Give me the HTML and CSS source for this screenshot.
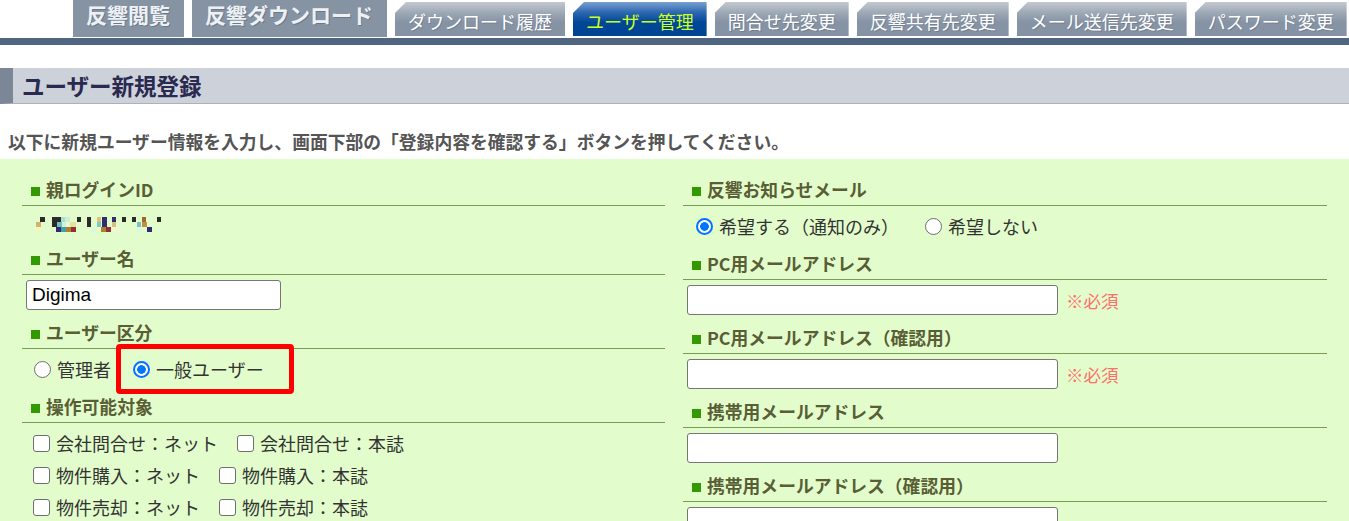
FILE: index.html
```html
<!DOCTYPE html>
<html lang="ja">
<head>
  <meta charset="UTF-8" />
  <meta name="viewport" content="width=device-width, initial-scale=1.0"/>
  <title>ユーザー新規登録</title>
  <link rel="stylesheet" href="styles.css">
</head>
<body>
  <div class="tabs">
    <a class="tab-main" href="#">反響閲覧</a>
    <a class="tab-main" href="#">反響ダウンロード</a>
    <a class="tab" href="#">ダウンロード履歴</a>
    <a class="tab active" href="#">ユーザー管理</a>
    <a class="tab" href="#">問合せ先変更</a>
    <a class="tab" href="#">反響共有先変更</a>
    <a class="tab" href="#">メール送信先変更</a>
    <a class="tab" href="#">パスワード変更</a>
  </div>
  <div class="tab-bar"></div>

  <h1 class="page-title">ユーザー新規登録</h1>
  <p class="lead">以下に新規ユーザー情報を入力し、画面下部の「登録内容を確認する」ボタンを押してください。</p>

  <form class="entry">
    <div class="col">
      <h3 class="field-title">親ログインID</h3>
      <div class="field-id">
        <!-- login id is masked -->
        <svg width="126" height="18" viewBox="0 0 126 18">
          <rect x="4" y="3" width="5" height="5" fill="#2b2b2b"/>
          <rect x="16" y="3" width="9" height="5" fill="#2b2b2b"/>
          <rect x="25" y="3" width="4" height="5" fill="#a8e0d0"/>
          <rect x="29" y="3" width="5" height="5" fill="#cdeed6"/>
          <rect x="41" y="3" width="4" height="5" fill="#2b2b2b"/>
          <rect x="51" y="3" width="4" height="5" fill="#2b2b2b"/>
          <rect x="61" y="3" width="4" height="5" fill="#e0c080"/>
          <rect x="66" y="3" width="5" height="5" fill="#2e2e6e"/>
          <rect x="76" y="3" width="4" height="5" fill="#2e2e6e"/>
          <rect x="86" y="3" width="4" height="5" fill="#2b2b2b"/>
          <rect x="96" y="3" width="4" height="5" fill="#2b2b2b"/>
          <rect x="106" y="3" width="4" height="5" fill="#a06830"/>
          <rect x="121" y="3" width="4" height="5" fill="#2b2b2b"/>
          <rect x="0" y="8" width="5" height="5" fill="#d8b070"/>
          <rect x="16" y="8" width="5" height="5" fill="#2b2b2b"/>
          <rect x="21" y="8" width="5" height="5" fill="#70c0c0"/>
          <rect x="26" y="8" width="4" height="5" fill="#d8f0d0"/>
          <rect x="34" y="8" width="6" height="5" fill="#e8e0a0"/>
          <rect x="51" y="8" width="4" height="5" fill="#2b2b2b"/>
          <rect x="61" y="8" width="4" height="5" fill="#80c8c8"/>
          <rect x="66" y="8" width="5" height="5" fill="#2e2e6e"/>
          <rect x="76" y="8" width="4" height="5" fill="#d8c080"/>
          <rect x="101" y="8" width="4" height="5" fill="#80c0c0"/>
          <rect x="106" y="8" width="5" height="5" fill="#c09040"/>
          <rect x="0" y="13" width="5" height="5" fill="#f0f8c0"/>
          <rect x="20" y="13" width="5" height="5" fill="#2e2e6e"/>
          <rect x="25" y="13" width="5" height="5" fill="#40a0b0"/>
          <rect x="30" y="13" width="5" height="5" fill="#b08030"/>
          <rect x="35" y="13" width="5" height="5" fill="#903030"/>
          <rect x="55" y="13" width="5" height="5" fill="#d8f8e0"/>
          <rect x="65" y="13" width="5" height="5" fill="#b08030"/>
          <rect x="70" y="13" width="5" height="5" fill="#903030"/>
          <rect x="75" y="13" width="10" height="5" fill="#f0f8d0"/>
          <rect x="101" y="13" width="5" height="5" fill="#d8f8e0"/>
          <rect x="111" y="13" width="5" height="5" fill="#2e2e6e"/>
        </svg>
      </div>

      <h3 class="field-title">ユーザー名</h3>
      <div class="field-input">
        <input type="text" class="text-short" value="Digima">
      </div>

      <h3 class="field-title">ユーザー区分</h3>
      <div class="field-choice">
        <label><input type="radio" name="userType"> 管理者</label>
        <label class="marked"><input type="radio" name="userType" checked> 一般ユーザー</label>
      </div>

      <h3 class="field-title">操作可能対象</h3>
      <div class="field-checks">
        <div class="check-row">
          <label><input type="checkbox"> 会社問合せ：ネット</label>
          <label><input type="checkbox"> 会社問合せ：本誌</label>
        </div>
        <div class="check-row">
          <label><input type="checkbox"> 物件購入：ネット</label>
          <label><input type="checkbox"> 物件購入：本誌</label>
        </div>
        <div class="check-row">
          <label><input type="checkbox"> 物件売却：ネット</label>
          <label><input type="checkbox"> 物件売却：本誌</label>
        </div>
      </div>
    </div>

    <div class="col">
      <h3 class="field-title">反響お知らせメール</h3>
      <div class="field-choice wide">
        <label><input type="radio" name="notice" checked> 希望する（通知のみ）</label>
        <label><input type="radio" name="notice"> 希望しない</label>
      </div>

      <h3 class="field-title">PC用メールアドレス</h3>
      <div class="field-input">
        <input type="text" class="text-long">
        <span class="required">※必須</span>
      </div>

      <h3 class="field-title">PC用メールアドレス（確認用）</h3>
      <div class="field-input">
        <input type="text" class="text-long">
        <span class="required">※必須</span>
      </div>

      <h3 class="field-title">携帯用メールアドレス</h3>
      <div class="field-input">
        <input type="text" class="text-long">
      </div>

      <h3 class="field-title">携帯用メールアドレス（確認用）</h3>
      <div class="field-input">
        <input type="text" class="text-long">
      </div>
    </div>
  </form>
</body>
</html>
```

FILE: styles.css
```css
body {
  margin: 0;
  font-family: "Noto Sans CJK JP", "Noto Sans", sans-serif;
  background: #fff;
  color: #333;
}

/* top navigation */
.tabs {
  display: flex;
  align-items: flex-end;
  gap: 8px;
  height: 38px;
  padding-left: 73px;
  overflow: hidden;
  white-space: nowrap;
}
.tabs a {
  text-decoration: none;
  flex-shrink: 0;
}
.tab-main {
  height: 37px;
  margin-bottom: 1px;
  padding: 0 14px 0 13px;
  box-sizing: border-box;
  background: #8593a3;
  color: #eef1f4;
  font-size: 21px;
  font-weight: bold;
  line-height: 28px;
  text-shadow: 1px 1px 0 rgba(60, 70, 90, 0.35);
}
.tab {
  height: 34px;
  margin-bottom: 2px;
  padding: 5px 13px 0;
  box-sizing: border-box;
  background: linear-gradient(to bottom, #c3c8cf 0%, #9aa5b3 35%, #8693a4 60%, #8592a3 100%);
  clip-path: polygon(11px 0, 100% 0, 100% 100%, 0 100%, 0 11px);
  color: #fff;
  font-size: 18px;
  line-height: 28px;
  text-shadow: 1px 1px 0 rgba(70, 80, 100, 0.3);
}
.tab.active {
  background: linear-gradient(to bottom, #7aa0d2 0%, #2e68b0 30%, #004797 60%, #004494 100%);
  color: #ccff22;
  text-shadow: none;
}
.tab-bar {
  height: 7px;
  background: #506680;
}

/* page heading */
.page-title {
  margin: 23px 0 0;
  height: 35px;
  border-left: 13px solid #7b8697;
  border-bottom: 1px solid #aeb2b8;
  background: #cdd1d9;
  padding-left: 9px;
  color: #2a2950;
  font-size: 22.5px;
  font-weight: bold;
  line-height: 35px;
}
.lead {
  margin: 25px 0 6px;
  padding-left: 8px;
  color: #555;
  font-size: 17.8px;
  font-weight: bold;
  line-height: 24px;
}

/* entry form */
.entry {
  display: grid;
  grid-template-columns: 643px 644px;
  column-gap: 18px;
  background: #e2fdcb;
  padding: 8px 22px 0;
  height: 354px;
  overflow: hidden;
}
.field-title {
  margin: 0;
  padding: 11px 0 5px 9px;
  border-bottom: 1px solid #7b9c56;
  color: #5a5e36;
  font-size: 17.8px;
  font-weight: bold;
  line-height: 22px;
}
.field-title::before {
  content: "";
  display: inline-block;
  width: 9px;
  height: 9px;
  margin-right: 6px;
  background: #339900;
  vertical-align: 1px;
}
.field-id {
  height: 30px;
  padding: 8px 0 0 14px;
  box-sizing: border-box;
}
.field-id svg {
  display: block;
}
.field-input {
  display: flex;
  align-items: center;
  height: 35px;
  padding: 5px 0 0 4px;
  box-sizing: border-box;
}
.field-input input {
  height: 30px;
  box-sizing: border-box;
  border: 1px solid #767676;
  border-radius: 3px;
  background: #fff;
  padding: 0 5px;
  font-family: "Liberation Sans", Arial, sans-serif;
  font-size: 19px;
  color: #000;
}
.text-short {
  width: 255px;
}
.text-long {
  width: 371px;
}
.required {
  margin-left: 8px;
  color: #ff6f6f;
  font-size: 17.5px;
}

.field-choice {
  display: flex;
  align-items: center;
  gap: 22px;
  height: 35px;
  padding: 5px 0 0 12px;
  box-sizing: border-box;
  font-size: 18px;
}
.field-choice.wide {
  gap: 26px;
  padding-left: 13px;
}
.field-choice label,
.check-row label {
  display: flex;
  align-items: center;
  height: 30px;
}

/* radios and checkboxes, drawn a size up */
.field-choice input,
.check-row input {
  appearance: none;
  flex: 0 0 auto;
  width: 17px;
  height: 17px;
  margin: 0 6px 0 0;
  box-sizing: border-box;
  border: 1.5px solid #6e6e6e;
  background: #fff;
}
.field-choice input {
  border-radius: 50%;
}
.field-choice input:checked {
  border: 2px solid #0075ff;
  background: radial-gradient(circle, #0075ff 0 4px, #fff 4.6px);
}
.check-row input {
  border-radius: 3px;
}

.marked {
  position: relative;
}
.marked::after {
  content: "";
  position: absolute;
  left: -17px;
  right: -30px;
  top: -10px;
  bottom: -10px;
  border: 5px solid #ff0000;
  border-radius: 4px;
}

.field-checks {
  padding: 4px 0 0 11px;
  font-size: 18px;
}
.check-row {
  display: flex;
  gap: 19px;
  height: 32px;
  align-items: center;
}
```
